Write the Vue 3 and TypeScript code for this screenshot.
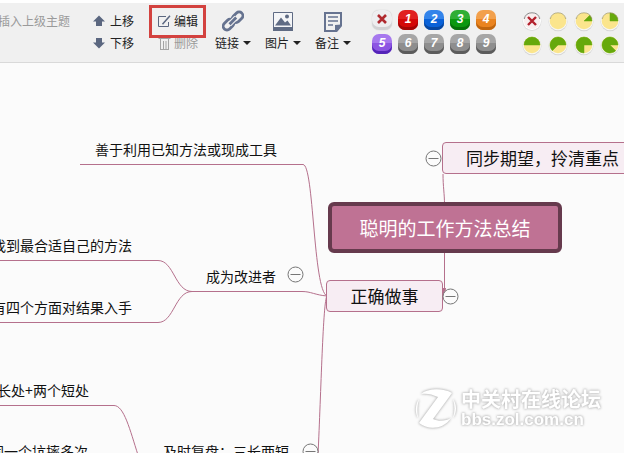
<script setup lang="ts">
interface Topic {
  text: string
  x: number
  y: number
  w: number
  kind: 'leaf' | 'main' | 'root'
}

const priorities = [
  { label: '1', top: '#e02020', face: '#d40808', edge: '#a30505' },
  { label: '2', top: '#3384ea', face: '#0a62d8', edge: '#0747a0' },
  { label: '3', top: '#2fae35', face: '#0b980f', edge: '#067009' },
  { label: '4', top: '#f2a04c', face: '#ea8420', edge: '#c0660f' },
  { label: '5', top: '#a678ee', face: '#8c55e2', edge: '#5424b8' },
  { label: '6', top: '#a6a6a6', face: '#8e8e8e', edge: '#5c5c5c' },
  { label: '7', top: '#a6a6a6', face: '#8e8e8e', edge: '#5c5c5c' },
  { label: '8', top: '#a6a6a6', face: '#8e8e8e', edge: '#5c5c5c' },
  { label: '9', top: '#a6a6a6', face: '#8e8e8e', edge: '#5c5c5c' },
]

const progressSteps = [0, 1, 2, 4, 5, 6, 7]

// Pie slice of n eighths that always ends at three o'clock.
function slice(n: number): string {
  if (n === 0) return ''
  const a = ((90 - n * 45) * Math.PI) / 180
  const x = (11 + 8 * Math.sin(a)).toFixed(2)
  const y = (11 - 8 * Math.cos(a)).toFixed(2)
  return `M11 11 L${x} ${y} A8 8 0 ${n > 4 ? 1 : 0} 1 19 11 Z`
}

// Positions on the map canvas.
const topics: Topic[] = [
  { text: '善于利用已知方法或现成工具', x: 80, y: 76, w: 212, kind: 'leaf' },
  { text: '找到最合适自己的方法', x: -32, y: 172, w: 188, kind: 'leaf' },
  { text: '有四个方面对结果入手', x: -32, y: 234, w: 188, kind: 'leaf' },
  { text: '成为改进者', x: 192, y: 203, w: 98, kind: 'leaf' },
  { text: '三个长处+两个短处', x: -55, y: 317, w: 168, kind: 'leaf' },
  { text: '在同一个坑摔多次', x: -48, y: 378, w: 160, kind: 'leaf' },
  { text: '及时复盘：三长两短', x: 150, y: 378, w: 152, kind: 'leaf' },
  { text: '同步期望，拎清重点', x: 442, y: 79, w: 201, kind: 'main' },
  { text: '正确做事', x: 326, y: 217, w: 117, kind: 'main' },
  { text: '聪明的工作方法总结', x: 328, y: 139, w: 234, kind: 'root' },
]

const toggles = [
  { x: 425, y: 87 },
  { x: 442, y: 225 },
  { x: 287, y: 203 },
  { x: 302, y: 380 },
]

const branches = [
  'M80 101.500H303C314 101.500 313 227 327 233',
  'M0 197.500H158C174 197.500 175 228.500 192 228.500',
  'M0 259.500H158C174 259.500 175 228.500 192 228.500',
  'M192 228.500H302C311 228.500 315 232 327 233',
  'M327 233C323 237 321 330 318 392',
  'M0 342.500H114C124 342.500 130 367 138 392',
  'M443 111C443 124 444.500 130 444.500 142V230',
]
</script>

<template>
  <div class="app">
    <header class="toolbar">
      <button class="cmd muted parent-cmd" type="button">插入上级主题</button>

      <div class="stack move">
        <button class="cmd" type="button">
          <svg width="12" height="12" viewBox="0 0 12 12"><path d="M6 0.500 12 6.500H9V11H3V6.500H0Z" fill="#5b6780" /></svg>
          上移
        </button>
        <button class="cmd" type="button">
          <svg width="12" height="12" viewBox="0 0 12 12"><path d="M6 11.500 12 5.500H9V1H3V5.500H0Z" fill="#5b6780" /></svg>
          下移
        </button>
      </div>

      <div class="stack edit">
        <button class="cmd marked" type="button">
          <svg width="13" height="13" viewBox="0 0 13 13" fill="none" stroke="#5b6780">
            <path d="M8 1.500H0.500V11.500H10.500V7" />
            <path d="M12 0.800 6 7.500 4.500 9.200" stroke-width="1.500" />
          </svg>
          编辑
        </button>
        <button class="cmd muted" type="button">
          <svg width="13" height="13" viewBox="0 0 13 13" fill="none" stroke="#a4a4a4">
            <path d="M0.500 1.500H12.500M2.500 2V12M2 12.500H11M10.500 2V12M5.500 4V12M8 4V12" />
          </svg>
          删除
        </button>
      </div>

      <div class="inserts">
        <button class="insert" type="button">
          <svg width="22" height="22" viewBox="0 0 22 22" fill="none" stroke="#667390" stroke-width="2.800">
            <rect x="9.500" y="3.600" width="12" height="7.500" rx="3.700" transform="rotate(-45 15.500 7.300)" />
            <rect x="0.500" y="10.900" width="12" height="7.500" rx="3.700" transform="rotate(-45 6.500 14.600)" />
            <path d="M7.500 14.200 14.200 7.500" stroke="#f0f0f0" stroke-width="5" />
            <path d="M7.500 14.200 14.200 7.500" />
          </svg>
          <span class="caption">链接<i class="caret"></i></span>
        </button>
        <button class="insert" type="button">
          <svg width="22" height="22" viewBox="0 0 22 22">
            <path d="M1.500 2.500H20.500V20.500H1.500Z" fill="#f4f5f7" stroke="#5f6b84" />
            <path d="M1 17H21V21H1Z" fill="#5f6b84" />
            <path d="M3 15.500 9 7.500 13 12.500 15.500 10.500 19 15.500Z" fill="#5f6b84" />
            <circle cx="15" cy="6.500" r="2" fill="#5f6b84" />
          </svg>
          <span class="caption">图片<i class="caret"></i></span>
        </button>
        <button class="insert" type="button">
          <svg width="22" height="22" viewBox="0 0 22 22" fill="none" stroke="#667390">
            <path d="M3 3H19V15L14 21H3Z" stroke-width="2" />
            <path d="M20 14.500V16L15 22H13V15Z" fill="#667390" stroke="none" />
            <path d="M6 7H16M6 11H16M6 15H11" stroke-width="1.500" />
          </svg>
          <span class="caption">备注<i class="caret"></i></span>
        </button>
      </div>

      <div class="priorities">
        <button class="badge clear" type="button" aria-label="✕">
          <svg width="10" height="10" viewBox="0 0 10 10"><path d="M1 1 9 9M9 1 1 9" stroke="#b02a30" stroke-width="2.600" /></svg>
        </button>
        <button
          v-for="p in priorities"
          :key="p.label"
          class="badge"
          type="button"
          :style="{ '--top': p.top, '--face': p.face, '--edge': p.edge }"
        >{{ p.label }}</button>
      </div>

      <div class="progress">
        <button class="pie" type="button" aria-label="✕">
          <svg width="22" height="22" viewBox="0 0 22 22">
            <circle cx="11" cy="11.500" r="9.500" fill="#dcdcdc" />
            <circle cx="11" cy="11" r="9" fill="#fff" />
            <circle cx="11" cy="11" r="8" fill="#f8eeee" />
            <path d="M3.200 9A8 8 0 0 1 18.800 9" fill="none" stroke="#888" />
            <path d="M7 7 15 15M15 7 7 15" stroke="#b3202c" stroke-width="2.400" />
          </svg>
        </button>
        <button v-for="n in progressSteps" :key="n" class="pie" type="button" :aria-label="`${n}/8`">
          <svg width="22" height="22" viewBox="0 0 22 22">
            <circle cx="11" cy="11.800" r="9.500" fill="#d6d6d6" />
            <circle cx="11" cy="11" r="9.200" fill="#f7f7f4" />
            <circle cx="11" cy="11" r="8.300" fill="#fbe58d" />
            <path :d="slice(n)" fill="#66a90c" stroke="#66a90c" stroke-width="0.500" />
            <path v-if="n < 4" d="M3.200 9A8 8 0 0 1 18.800 9" fill="none" stroke="#8a8560" stroke-opacity="0.600" />
          </svg>
        </button>
      </div>
    </header>

    <main class="canvas">
      <svg class="branches" width="100%" height="100%">
        <path v-for="d in branches" :key="d" :d="d" />
        <path class="joint" d="M442 225H446L445 233H442Z" />
      </svg>
      <div
        v-for="t in topics"
        :key="t.text"
        class="topic"
        :class="t.kind"
        :style="{ left: t.x + 'px', top: t.y + 'px', width: t.w + 'px' }"
      >{{ t.text }}</div>
      <button
        v-for="t in toggles"
        :key="t.x"
        class="toggle"
        type="button"
        aria-label="−"
        :style="{ left: t.x + 'px', top: t.y + 'px' }"
      >
        <svg width="17" height="17" viewBox="0 0 17 17" fill="none" stroke="#767676">
          <circle cx="8.500" cy="8.500" r="7.500" fill="#fbfbfb" />
          <path d="M3.500 8.500H13.500" />
        </svg>
      </button>

      <div class="watermark">
        <svg width="44" height="42" viewBox="0 0 44 42">
          <path d="M7 6C14 0 29 0 38 5L19 31C25 34 32 33 37 30C29 42 14 42 5 35L24 9C18 6 12 5 7 6Z" />
          <path d="M5 11C1 17 1 25 4 30C3 24 3 17 5 11ZM39 11C43 17 43 24 39 30C41 24 41 17 39 11Z" />
        </svg>
        <div class="mark-text">
          <span class="mark-name">中关村在线论坛</span>
          <span class="mark-url">bbs.zol.com.cn</span>
        </div>
      </div>
    </main>
  </div>
</template>

<style>
body {
  margin: 0;
  background: #fff;
}
</style>

<style scoped>
.app {
  display: flex;
  flex-direction: column;
  height: 100vh;
  padding-top: 3px;
  box-sizing: border-box;
  overflow: hidden;
  font-family: "Noto Sans CJK SC", "Liberation Sans", sans-serif;
  color: #222;
}

button {
  margin: 0;
  padding: 0;
  border: 0;
  background: none;
  font: inherit;
  color: inherit;
  cursor: pointer;
}

svg {
  display: block;
  flex: none;
}

.toolbar {
  display: flex;
  flex: none;
  align-items: flex-start;
  padding: 7px 0 6px;
  border-bottom: 1px solid #d9d9d9;
  background: #f0f0f0;
  font-size: 12px;
  overflow: hidden;
  white-space: nowrap;
}

.toolbar > * {
  flex: none;
}

.cmd {
  display: flex;
  align-items: center;
  gap: 5px;
  height: 22px;
  line-height: 22px;
}

.muted {
  color: #9a9a9a;
}

.parent-cmd {
  margin-left: -2px;
}

.stack {
  display: flex;
  flex-direction: column;
}

.move {
  margin-left: 23px;
}

.edit {
  margin-left: 24px;
}

.edit .cmd {
  gap: 3px;
}

.marked {
  position: relative;
}

.marked::after {
  content: "";
  position: absolute;
  inset: -5px -8px -6px -9px;
  border: 3px solid #d3423f;
}

.inserts {
  display: flex;
  gap: 14px;
  margin-left: 17px;
}

.insert {
  display: flex;
  flex-direction: column;
  align-items: center;
}

.caption {
  display: flex;
  align-items: center;
  gap: 4px;
  line-height: 22px;
}

.caret {
  border: 4px solid transparent;
  border-top-color: #222;
  border-bottom: 0;
}

.priorities,
.progress {
  display: grid;
}

.priorities {
  grid-template-columns: repeat(5, 20px);
  gap: 4px 6px;
  margin-left: 21px;
}

.badge {
  height: 20px;
  padding-bottom: 3px;
  border-radius: 7px;
  background: linear-gradient(var(--top) 45%, var(--face) 45%);
  box-shadow: inset 0 -3px 0 var(--edge);
  color: #fff;
  font: italic bold 12px/16px "Liberation Sans", sans-serif;
}

.clear {
  display: flex;
  align-items: center;
  justify-content: center;
  background: #eeeef0;
  box-shadow: inset 0 -3px 0 #d2d2d4, 0 0 1px #bbb;
}

.progress {
  grid-template-columns: repeat(4, 22px);
  gap: 2px 4px;
  margin-left: 25px;
}

.canvas {
  position: relative;
  flex: 1;
  min-height: 0;
  overflow: hidden;
  background: #fbfbfb;
}

.branches {
  position: absolute;
  inset: 0;
  fill: none;
  stroke: #b5708c;
  stroke-width: 1;
}

.joint {
  fill: #b5708c;
  stroke: none;
}

.topic {
  position: absolute;
  box-sizing: border-box;
  text-align: center;
  white-space: nowrap;
  color: #111;
}

.leaf {
  font-size: 14px;
  line-height: 20px;
}

.main {
  border: 1px solid #b5708c;
  border-radius: 4px;
  background: #f7edf3;
  font-size: 17px;
  line-height: 30px;
}

.root {
  border: 4px solid #663a4d;
  border-radius: 6px;
  background: #bf7294;
  color: #fff;
  font-size: 19px;
  line-height: 43px;
}

.toggle {
  position: absolute;
}

.watermark {
  position: absolute;
  right: 23px;
  bottom: 23px;
  display: flex;
  align-items: center;
  gap: 3px;
  color: #fff;
  fill: #fff;
  filter: drop-shadow(0 0 1px #bbb) drop-shadow(0 0 1px #ccc);
}

.mark-text {
  display: flex;
  flex-direction: column;
  font-weight: bold;
}

.mark-name {
  font-size: 20px;
  line-height: 22px;
}

.mark-url {
  font: bold 17px/20px "Liberation Sans", sans-serif;
}
</style>
